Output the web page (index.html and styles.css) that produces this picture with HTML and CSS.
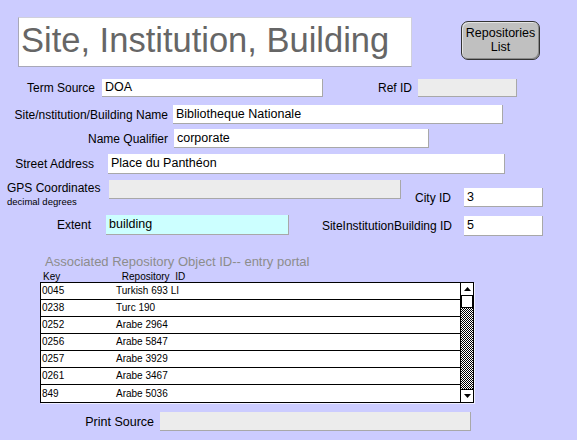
FILE: index.html
```html
<!DOCTYPE html>
<html>
<head>
<meta charset="utf-8">
<link rel="stylesheet" href="styles.css">
</head>
<body>
<div class="page">
  <div class="row top">
    <div class="title">Site, Institution, Building</div>
    <div class="btn">Repositories<br>List</div>
  </div>

  <div class="row r-term">
    <div class="lbl w-term">Term Source</div>
    <div class="fld f-term">DOA</div>
    <div class="lbl w-ref">Ref ID</div>
    <div class="fld gray f-ref"></div>
  </div>

  <div class="row r-name">
    <div class="lbl w-name">Site/nstitution/Building Name</div>
    <div class="fld f-name">Bibliotheque Nationale</div>
  </div>

  <div class="row r-qual">
    <div class="lbl w-qual">Name Qualifier</div>
    <div class="fld f-qual">corporate</div>
  </div>

  <div class="row r-street">
    <div class="lbl w-street">Street Address</div>
    <div class="fld f-street">Place du Panthéon</div>
  </div>

  <div class="row r-gps">
    <div class="gpslbl">
      <div class="gps-main">GPS Coordinates</div>
      <div class="gps-sub">decimal degrees</div>
    </div>
    <div class="fld gray f-gps"></div>
    <div class="grp g-city">
      <div class="lbl w-city">City ID</div>
      <div class="fld f-id">3</div>
    </div>
  </div>

  <div class="row r-extent">
    <div class="lbl w-extent">Extent</div>
    <div class="fld cyan f-extent">building</div>
    <div class="grp g-sib">
      <div class="lbl w-sib">SiteInstitutionBuilding ID</div>
      <div class="fld f-id">5</div>
    </div>
  </div>

  <div class="portal-title">Associated Repository Object ID-- entry portal</div>
  <div class="portal-head">
    <span class="h-key">Key</span>
    <span class="h-rep">Repository&nbsp; ID</span>
  </div>
  <div class="portal">
    <div class="rows">
      <div class="prow"><span class="c-key">0045</span><span class="c-rep">Turkish 693 LI</span></div>
      <div class="prow"><span class="c-key">0238</span><span class="c-rep">Turc 190</span></div>
      <div class="prow"><span class="c-key">0252</span><span class="c-rep">Arabe 2964</span></div>
      <div class="prow"><span class="c-key">0256</span><span class="c-rep">Arabe 5847</span></div>
      <div class="prow"><span class="c-key">0257</span><span class="c-rep">Arabe 3929</span></div>
      <div class="prow"><span class="c-key">0261</span><span class="c-rep">Arabe 3467</span></div>
      <div class="prow last"><span class="c-key">849</span><span class="c-rep">Arabe 5036</span></div>
    </div>
    <div class="sbar">
      <div class="arrow up"><svg width="11" height="6" viewBox="0 0 11 6"><path d="M5.5 1 L9 5 L2 5 Z" fill="#000"/></svg></div>
      <div class="thumb"></div>
      <div class="track"></div>
      <div class="arrow down"><svg width="11" height="6" viewBox="0 0 11 6"><path d="M2 1 L9 1 L5.5 5 Z" fill="#000"/></svg></div>
    </div>
  </div>

  <div class="row r-print">
    <div class="lbl w-print">Print Source</div>
    <div class="fld gray f-print"></div>
  </div>
</div>
</body>
</html>
```

FILE: styles.css
```css
html, body {
  margin: 0;
  padding: 0;
  background: #ccccff;
}
body {
  width: 577px;
  height: 440px;
  overflow: hidden;
  font-family: "Liberation Sans", Arial, sans-serif;
  font-size: 12px;
  color: #000;
}
.page {
  padding-top: 17px;
}
.row {
  display: flex;
  align-items: center;
}
.top {
  align-items: flex-start;
  height: 50px;
}
.title {
  flex: none;
  margin-left: 18px;
  width: 394px;
  height: 50px;
  box-sizing: border-box;
  background: #fff;
  border: 1px solid #d0d0dc;
  border-left-color: #a8a8b8;
  border-bottom-color: #a8a8b8;
  color: #666;
  font-size: 34.5px;
  line-height: 44px;
  padding-left: 2px;
  white-space: nowrap;
  overflow: hidden;
}
.btn {
  flex: none;
  margin-left: 49px;
  margin-top: 4px;
  width: 79px;
  height: 39px;
  box-sizing: border-box;
  border: 1px solid #333;
  border-radius: 7px;
  background: #c0c0c0;
  box-shadow: inset 1px 1px 0 #e4e4e4, inset -1px -1px 0 #8a8a8a;
  text-align: center;
  font-size: 12.5px;
  line-height: 14px;
  padding-top: 4px;
}
.lbl {
  text-align: right;
  white-space: nowrap;
  flex: none;
}
.fld {
  flex: none;
  background: #fff;
  border-right: 1px solid #a8a8a8;
  border-bottom: 1px solid #a8a8a8;
  box-sizing: border-box;
  padding-left: 3px;
  font-size: 12.5px;
  line-height: 18px;
  white-space: nowrap;
  overflow: hidden;
}
.gray { background: #ececec; }
.cyan { background: #ccffff; }

.r-term { margin-top: 12px; height: 18px; }
.w-term { width: 95px; }
.f-term { margin-left: 7px; width: 221px; height: 18px; line-height: 17px; }
.w-ref { width: 89px; }
.f-ref { margin-left: 6px; width: 99px; height: 18px; }

.r-name { margin-top: 8px; height: 19px; }
.w-name { width: 168px; }
.f-name { margin-left: 5px; width: 330px; height: 19px; }

.r-qual { margin-top: 5px; height: 19px; }
.w-qual { width: 168px; }
.f-qual { margin-left: 6px; width: 255px; height: 19px; }

.r-street { margin-top: 6px; height: 20px; }
.w-street { width: 94px; }
.f-street { margin-left: 14px; width: 397px; height: 20px; line-height: 19px; }

.r-gps { margin-top: 6px; height: 28px; align-items: flex-start; }
.gpslbl { margin-left: 7px; width: 102px; flex: none; }
.gps-main { line-height: 15px; margin-top: 1px; }
.gps-sub { font-size: 9.5px; line-height: 12px; margin-top: 0; }
.f-gps { width: 292px; height: 19px; }
.grp { display: flex; align-items: center; flex: none; }
.g-city { margin-top: 8px; }
.w-city { width: 50px; }
.g-city .f-id { margin-left: 13px; }
.f-id { width: 79px; height: 19px; }

.r-extent { margin-top: 7px; height: 21px; align-items: flex-start; }
.w-extent { width: 91px; line-height: 20px; }
.f-extent { margin-left: 15px; width: 183px; height: 20px; line-height: 19px; }
.g-sib { margin-top: 1px; }
.w-sib { width: 163px; line-height: 20px; }
.g-sib .f-id { margin-left: 12px; height: 20px; line-height: 19px; }

.portal-title {
  margin-top: 19px;
  padding-left: 45px;
  font-size: 13px;
  line-height: 14px;
  color: #8c8c8c;
  white-space: nowrap;
}
.portal-head {
  margin-top: 3px;
  height: 10px;
  font-size: 10px;
  line-height: 10px;
  white-space: nowrap;
}
.h-key { display: inline-block; margin-left: 43px; width: 76px; }
.h-rep { display: inline-block; }

.portal {
  margin-left: 40px;
  width: 434px;
  height: 121px;
  box-sizing: border-box;
  border: 1px solid #000;
  background: #fff;
  display: flex;
  box-shadow: 1px 1px 0 #eeeeff;
}
.rows { flex: 1; }
.prow {
  height: 17px;
  box-sizing: border-box;
  border-bottom: 1px solid #000;
  display: flex;
  align-items: center;
  font-size: 10px;
  line-height: 16px;
  white-space: nowrap;
}
.prow.last { border-bottom: none; }
.c-key { width: 74px; padding-left: 1px; }

.sbar {
  width: 12px;
  flex: none;
  border-left: 1px solid #000;
  display: flex;
  flex-direction: column;
}
.arrow {
  height: 12px;
  flex: none;
  display: flex;
  align-items: center;
  justify-content: center;
  background: #fff;
}
.arrow.up { border-bottom: 1px solid #000; }
.arrow.down { border-top: 1px solid #000; }
.arrow svg { display: block; }
.thumb {
  height: 12px;
  flex: none;
  box-sizing: border-box;
  border: 1px solid #000;
  border-top: none;
  background: #fff;
}
.track {
  flex: 1;
  background: repeating-conic-gradient(#000 0 25%, #fff 0 50%) 0 0 / 2px 2px;
}

.r-print { margin-top: 9px; height: 19px; }
.w-print { width: 154px; font-size: 12.5px; }
.f-print { margin-left: 6px; width: 311px; height: 19px; }
```
